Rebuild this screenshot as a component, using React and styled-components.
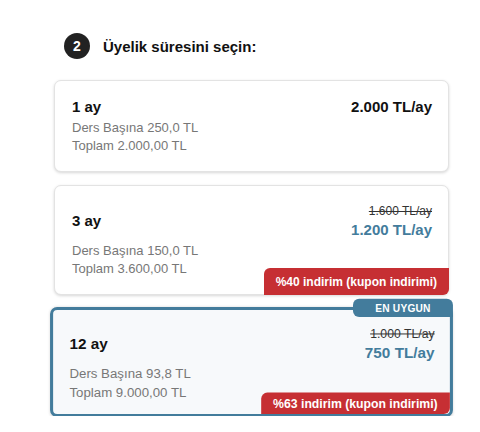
import React from 'react';
import styled, { createGlobalStyle, css } from 'styled-components';

const GlobalStyle = createGlobalStyle`
  body {
    margin: 0;
    background: #ffffff;
    font-family: "Liberation Sans", Arial, sans-serif;
    color: #111;
  }
`;

// Layout
const Section = styled.section`
  width: 395px;
  margin-left: 54px;
  padding-top: 33px;
`;

const StepHeader = styled.div`
  display: flex;
  align-items: center;
  gap: 13px;
  padding-left: 10px;
  margin-bottom: 21px;
`;

const StepNumber = styled.span`
  width: 26px;
  height: 26px;
  border-radius: 50%;
  background: #222;
  color: #fff;
  font-size: 14px;
  font-weight: bold;
  display: flex;
  align-items: center;
  justify-content: center;
`;

const StepTitle = styled.h2`
  margin: 0;
  font-size: 15px;
  font-weight: bold;
  color: #111;
`;

const PlanList = styled.div`
  display: flex;
  flex-direction: column;
  gap: 13px;
`;

const PlanCard = styled.div`
  position: relative;
  background: #fff;
  border: 1px solid #e3e3e3;
  border-radius: 7px;
  padding: 16px 16px 16px 17px;
  box-shadow: 0 1px 3px rgba(0, 0, 0, 0.16);

  ${(p) =>
    p.$selected &&
    css`
      border: 3px solid #437c9c;
      background: #f7f9fb;
      padding: 14px 15px 12px 16px;
      transform: scale(1.02);
    `}
`;

const TopRow = styled.div`
  display: flex;
  justify-content: space-between;
  align-items: center;
`;

const Duration = styled.div`
  font-size: 15px;
  font-weight: bold;
  line-height: 20px;
`;

const PriceBox = styled.div`
  display: flex;
  flex-direction: column;
  align-items: flex-end;
`;

const OldPrice = styled.span`
  font-size: 12px;
  line-height: 18px;
  color: #333;
  text-decoration: line-through;
`;

const Price = styled.span`
  font-size: 15px;
  font-weight: bold;
  line-height: 20px;
  color: ${(p) => (p.$discounted ? '#437c9c' : '#111')};
`;

const Details = styled.div`
  margin-top: 2px;
  font-size: 13px;
  line-height: 18px;
  color: #777;
`;

const DiscountTag = styled.div`
  position: absolute;
  right: ${(p) => (p.$compact ? '0' : '-1px')};
  bottom: ${(p) => (p.$compact ? '0' : '-1px')};
  height: ${(p) => (p.$compact ? '21px' : '27px')};
  padding: 0 12px;
  display: flex;
  align-items: center;
  background: #c62f33;
  color: #fff;
  font-size: 12px;
  font-weight: bold;
  border-radius: 6px 0 6px 0;
`;

const BestTag = styled.div`
  position: absolute;
  top: -11px;
  right: -3px;
  width: 98px;
  height: 18px;
  display: flex;
  align-items: center;
  justify-content: center;
  background: #437c9c;
  color: #fff;
  font-size: 10px;
  font-weight: bold;
  letter-spacing: 0.2px;
  border-radius: 6px 6px 0 6px;
`;

const plans = [
  { months: 1, price: '2.000 TL/ay', perLesson: '250,0', total: '2.000,00' },
  {
    months: 3,
    oldPrice: '1.600 TL/ay',
    price: '1.200 TL/ay',
    perLesson: '150,0',
    total: '3.600,00',
    discount: 40,
  },
  {
    months: 12,
    oldPrice: '1.000 TL/ay',
    price: '750 TL/ay',
    perLesson: '93,8',
    total: '9.000,00',
    discount: 63,
    best: true,
  },
];

const App = () => {
  return (
    <>
      <GlobalStyle />
      <Section>
        <StepHeader>
          <StepNumber>2</StepNumber>
          <StepTitle>Üyelik süresini seçin:</StepTitle>
        </StepHeader>

        <PlanList>
          {plans.map((plan) => (
            <PlanCard key={plan.months} $selected={plan.best}>
              {plan.best && <BestTag>EN UYGUN</BestTag>}
              <TopRow>
                <Duration>{plan.months} ay</Duration>
                <PriceBox>
                  {plan.oldPrice && <OldPrice>{plan.oldPrice}</OldPrice>}
                  <Price $discounted={!!plan.oldPrice}>{plan.price}</Price>
                </PriceBox>
              </TopRow>
              <Details>
                <div>Ders Başına {plan.perLesson} TL</div>
                <div>Toplam {plan.total} TL</div>
              </Details>
              {plan.discount && (
                <DiscountTag $compact={plan.best}>
                  %{plan.discount} indirim (kupon indirimi)
                </DiscountTag>
              )}
            </PlanCard>
          ))}
        </PlanList>
      </Section>
    </>
  );
};

export default App;
